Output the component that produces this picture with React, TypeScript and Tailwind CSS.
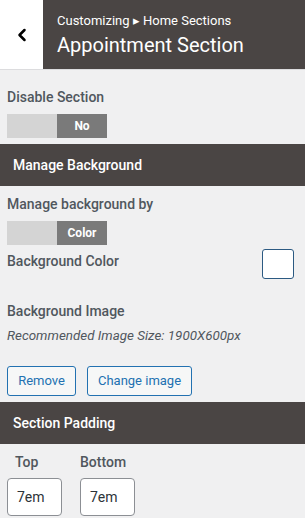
import { ChevronLeft } from "lucide-react";

function Toggle({ label }: { label: string }) {
  return (
    <div className="flex h-[24px] w-[100px]">
      <div className="w-1/2 bg-[#d4d4d4]" />
      <div className="flex w-1/2 items-center justify-center bg-[#7a7a7a] text-[12px] font-bold text-white">
        {label}
      </div>
    </div>
  );
}

function Bar({ title }: { title: string }) {
  return (
    <div className="flex h-[42px] items-center bg-[#4a4544] px-[13px] text-[14px] font-medium text-white">
      {title}
    </div>
  );
}

export default function App() {
  return (
    <div className="h-[518px] w-[305px] overflow-hidden bg-[#f0f0f1] font-['Roboto',sans-serif] text-[#50575e]">
      <div className="flex h-[70px] border-b border-[#dcdcde]">
        <div className="flex w-[43px] items-center justify-center bg-white text-black">
          <ChevronLeft size={20} strokeWidth={3} />
        </div>
        <div className="flex flex-1 flex-col justify-center bg-[#4a4544] pl-[14px] text-white">
          <div className="text-[13px] leading-[16px]">Customizing ▸ Home Sections</div>
          <div className="mt-[4px] text-[20px] leading-[24px]">Appointment Section</div>
        </div>
      </div>

      <div className="px-[7px] pt-[18px] pb-[6px]">
        <div className="text-[14px] font-medium leading-[18px]">Disable Section</div>
        <div className="mt-[8px]">
          <Toggle label="No" />
        </div>
      </div>

      <Bar title="Manage Background" />

      <div className="px-[7px] pt-[9px]">
        <div className="text-[14px] font-medium leading-[18px]">Manage background by</div>
        <div className="mt-[8px]">
          <Toggle label="Color" />
        </div>
        <div className="mt-[4px] flex items-start justify-between pr-[4px]">
          <div className="pt-[3px] text-[14px] font-medium leading-[18px]">Background Color</div>
          <div className="h-[30px] w-[32px] rounded-[3px] border border-[#2c5a82] bg-white" />
        </div>
        <div className="mt-[23px] text-[14px] font-medium leading-[18px]">Background Image</div>
        <div className="mt-[8px] text-[13.4px] italic leading-[16px] text-[#50575e]">
          Recommended Image Size: 1900X600px
        </div>
        <div className="mt-[22px] flex gap-[11px]">
          <button className="h-[30px] w-[69px] rounded-[3px] border border-[#2271b1] bg-[#f6f7f7] text-[13px] text-[#2271b1]">
            Remove
          </button>
          <button className="h-[30px] w-[105px] rounded-[3px] border border-[#2271b1] bg-[#f6f7f7] text-[13px] text-[#2271b1]">
            Change image
          </button>
        </div>
      </div>

      <div className="mt-[6px]">
        <Bar title="Section Padding" />
      </div>

      <div className="flex gap-[18px] px-[7px] pt-[9px]">
        <div className="flex flex-col">
          <div className="pl-[8px] text-[14px] font-medium leading-[18px]">Top</div>
          <div className="mt-[7px] flex h-[38px] w-[55px] items-center rounded-[4px] border border-[#8c8f94] bg-white pl-[9px] text-[14px] text-[#2c3338]">
            7em
          </div>
        </div>
        <div className="flex flex-col">
          <div className="text-[14px] font-medium leading-[18px]">Bottom</div>
          <div className="mt-[7px] flex h-[38px] w-[55px] items-center rounded-[4px] border border-[#8c8f94] bg-white pl-[9px] text-[14px] text-[#2c3338]">
            7em
          </div>
        </div>
      </div>
    </div>
  );
}
